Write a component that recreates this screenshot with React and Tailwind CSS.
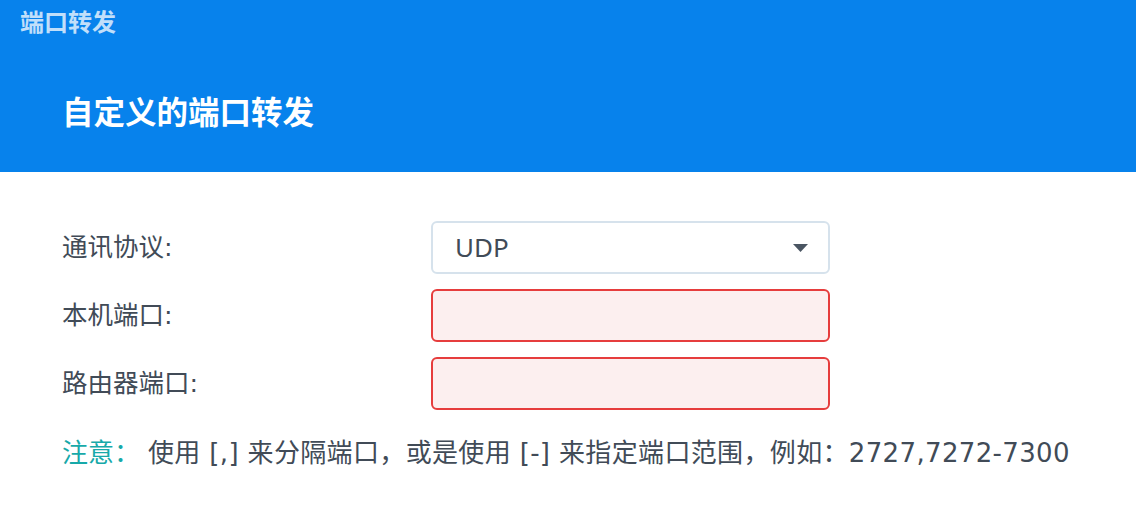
function FieldRow({ label, children }) {
  return (
    <div className="flex items-center">
      <div className="w-[369px] shrink-0 font-['DejaVu_Sans','Noto_Sans_CJK_SC',sans-serif] text-[25.5px] text-[#414b57]">{label}</div>
      {children}
    </div>
  )
}

export default function App() {
  return (
    <div className="h-[510px] w-[1136px] overflow-hidden bg-white font-['Noto_Sans','Noto_Sans_CJK_SC',sans-serif]">
      <header className="h-[172px] bg-[#0782ec] px-[20px] pt-[6px]">
        <div className="text-[24px] font-bold leading-[32px] text-white/75">端口转发</div>
        <h1 className="ml-[42px] mt-[54px] text-[31.5px] font-bold leading-[40px] text-white">自定义的端口转发</h1>
      </header>

      <main className="px-[62px] pt-[49px]">
        <div className="flex flex-col gap-[15px]">
          <FieldRow label="通讯协议:">
            <div className="flex h-[53px] w-[399px] items-center justify-between rounded-[6px] border-2 border-[#d6e2ec] bg-white pl-[22px] pr-[20px]">
              <span className="text-[26px] text-[#414b57]">UDP</span>
              <svg width="15" height="8" viewBox="0 0 15 8">
                <polygon points="0,0 15,0 7.5,8" fill="#4a5562" />
              </svg>
            </div>
          </FieldRow>
          <FieldRow label="本机端口:">
            <div className="h-[53px] w-[399px] rounded-[6px] border-2 border-[#e63d3d] bg-[#fcefef]" />
          </FieldRow>
          <FieldRow label="路由器端口:">
            <div className="h-[53px] w-[399px] rounded-[6px] border-2 border-[#e63d3d] bg-[#fcefef]" />
          </FieldRow>
        </div>

        <p className="mt-[26px] flex font-['DejaVu_Sans','Noto_Sans_CJK_SC',sans-serif] text-[26px] leading-[34px] text-[#414b57]">
          <span className="w-[86px] shrink-0 text-[#17a9a9]">注意：</span>
          <span className="tracking-[0.35px]">使用 [,] 来分隔端口，或是使用 [-] 来指定端口范围，例如：2727,7272-7300</span>
        </p>
      </main>
    </div>
  )
}
